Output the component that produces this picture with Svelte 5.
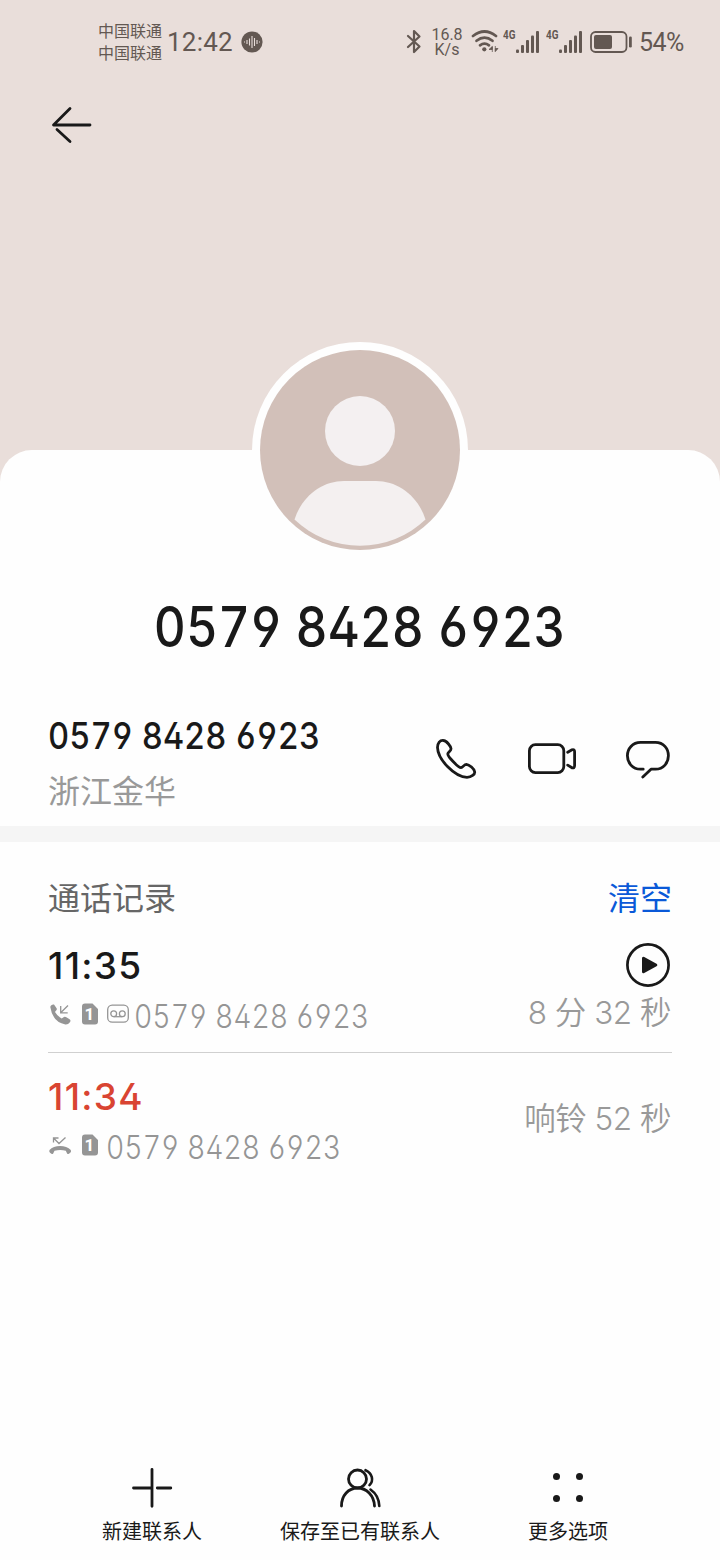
<script>
	const number = '0579 8428 6923';
	const carriers = ['中国联通', '中国联通'];
	const bar_heights = [3.5, 8, 13, 17.5, 22];
	const records = [
		{ time: '11:35', missed: false, recorded: true, duration: '8 分 32 秒' },
		{ time: '11:34', missed: true, recorded: false, duration: '响铃 52 秒' }
	];
</script>

<div class="screen">
	<header class="hero">
		<div class="status">
			<div class="carriers">
				{#each carriers as carrier}
					<span>{carrier}</span>
				{/each}
			</div>
			<span class="clock">12:42</span>
			<svg class="recorder" width="22" height="22" viewBox="0 0 22 22">
				<circle cx="11" cy="11" r="10.6" fill="#635852" />
				<path d="M3 11h1M6 9v4M8.5 7.5v7M11 5v12M13.5 7v8M16 9v4M18 11h1" stroke="#e9deda" stroke-width="1.1" />
			</svg>

			<div class="indicators">
				<svg class="bluetooth" width="16" height="26" viewBox="0 0 16 26">
					<path d="M2 7 13.500 17.500 8 23V2l5.500 5.500L2 18" fill="none" stroke="#635852" stroke-width="2.200" stroke-linejoin="round" stroke-linecap="round" />
				</svg>
				<div class="speed">
					<span>16.8</span>
					<span>K/s</span>
				</div>
				<svg class="wifi" width="28" height="24" viewBox="0 0 28 24">
					<g fill="none" stroke="#635852" stroke-width="2.700" stroke-linecap="round">
						<path d="M2 6Q13.500 -3 25 6" />
						<path d="M5.500 10.800Q13.500 4.500 21.500 10.800" />
						<path d="M9 15.300Q13.500 12 18 15.300" />
					</g>
					<circle cx="13.300" cy="19.300" r="2.100" fill="#635852" />
					<path d="M18 19.500h3.300V16.500zM21.300 16.500v5.500M24.300 16v5.500M24.300 18.500h2.700l-2.700 3z" fill="#635852" stroke="#635852" stroke-width=".8" />
				</svg>
				{#each [1, 2] as sim (sim)}
					<div class="signal">
						<span>4G</span>
						<svg width="24" height="23" viewBox="0 0 24 23">
							{#each bar_heights as h, i}
								<rect x={i * 5} y={22 - h} width="3" height={h} rx="1" fill="#635852" />
							{/each}
						</svg>
					</div>
				{/each}
				<svg class="battery" width="42" height="22" viewBox="0 0 42 22">
					<rect x="1" y="1" width="35.500" height="20" rx="4.500" fill="none" stroke="#635852" stroke-width="1.800" />
					<rect x="4" y="4" width="18" height="14" rx="2" fill="#635852" />
					<rect x="39" y="5.500" width="2.800" height="11" rx="1.300" fill="#635852" />
				</svg>
				<span class="percent">54%</span>
			</div>
		</div>

		<button class="back" aria-label="返回">
			<svg width="48" height="48" viewBox="0 0 48 48">
				<path d="M42 24H5.500L22 7.500M9 28.500 22 40.500" />
			</svg>
		</button>
	</header>

	<main class="sheet">
		<div class="avatar">
			<svg width="200" height="200" viewBox="0 0 200 200">
				<circle cx="100" cy="100" r="100" fill="#d2c0b9" />
				<circle cx="100" cy="81" r="35" fill="#f4f0f1" />
				<path d="M34.500 169.500C42 146 62 131 84 131h32c22 0 42 15 49.500 38.500a95 95 0 0 1-131 0z" fill="#f4f0f0" />
			</svg>
		</div>
		<h1><span class="digits">{number}</span></h1>

		<section class="contact">
			<div>
				<p class="phone"><span class="digits">{number}</span></p>
				<p class="region">浙江金华</p>
			</div>
			<div class="actions">
				<svg width="48" height="48" viewBox="0 0 48 48">
					<path d="M11.500 5.500C8 5 5.500 8 5.500 12.500 6 24.500 22.500 42 35 42.300c4.500 0 8-3 7.700-5.500-.3-2.800-5.500-7.300-8.200-7.500-2.500 0-3.500 3.200-5.500 3.400-2.500.1-13.500-11.200-13.200-13.900.2-1.800 3.400-2.800 3.200-5.300-.2-2-4.500-8-7.500-8z" />
				</svg>
				<svg width="48" height="48" viewBox="0 0 48 48">
					<rect x="1.400" y="9.700" width="34.400" height="27.900" rx="6" />
					<path d="M39.700 17.300 44 14.800q2.600-1 2.600 2v13.800q0 3-2.600 2.200l-4.300-2.700" />
				</svg>
				<svg width="48" height="48" viewBox="0 0 48 48">
					<path d="M18.800 42 27 34.200h4.500c8 0 12.900-6.500 12.900-13.500S39.500 7.400 31.500 7.400h-15c-8 0-13.100 6.300-13.100 13.300s5 13.500 13.100 13.500h2.700" />
				</svg>
			</div>
		</section>

		<section class="log">
			<div class="log-head">
				<h2>通话记录</h2>
				<button class="clear">清空</button>
			</div>
			{#each records as record}
				<div class="record">
					<div>
						<p class="time" class:missed={record.missed}>{record.time}</p>
						<div class="meta">
							{#if record.missed}
								<svg class="kind" width="24" height="22" viewBox="0 0 24 22">
									<path d="M1.500 16C6 10.500 18 10.500 22.800 16q.7 1.500-.5 2.800l-1.800 1.200q-.8.2-1.400-.5l-1.300-2.700q-5.500-1.800-11.300 0l-1.300 2.700q-.6.7-1.400.5l-1.800-1.200q-1.200-1.300-.5-2.800z" fill="#959595" />
									<path d="M5.500 8.500V4h5M5.500 4l5.500 5.500L17.500 3.500" fill="none" stroke="#959595" stroke-width="1.300" />
								</svg>
							{:else}
								<svg class="kind" width="24" height="22" viewBox="0 0 24 22">
									<path d="M2.300 4C2.500 2.300 4.500 1 6 1.500l2.600 3.700q.7 1.500-.7 2.600L7 9q2.200 4 6.700 6.600l1.500-1.200q1.300-1.100 2.700-.3l3.700 2.200q1.600 1.300.3 3-1.700 2.400-4.500 2.200Q4.500 19 2.300 4z" fill="#959595" />
									<path d="M12.700 3v6.800h7M12.700 9.800l7.300-7.300" fill="none" stroke="#959595" stroke-width="1.300" />
								</svg>
							{/if}
							<svg class="sim" width="16" height="22" viewBox="0 0 16 22">
								<path d="M3 .500h7.500L16 6v12.500a3 3 0 0 1-3 3H3a3 3 0 0 1-3-3v-15a3 3 0 0 1 3-3z" fill="#959595" />
								<text x="7.500" y="17.200" text-anchor="middle">1</text>
							</svg>
							{#if record.recorded}
								<svg class="voicemail" width="22" height="22" viewBox="0 0 22 22">
									<g fill="none" stroke="#959595" stroke-width="1.300">
										<rect x=".700" y="2.200" width="20.600" height="17" rx="4.500" />
										<circle cx="6.700" cy="10.800" r="2.900" />
										<circle cx="15.300" cy="10.800" r="2.900" />
										<path d="M6.700 13.700h8.600" />
									</g>
								</svg>
							{/if}
							<span class="caller digits">{number}</span>
						</div>
					</div>
					<div class="result">
						{#if record.recorded}
							<svg width="44" height="44" viewBox="0 0 44 44">
								<circle cx="22" cy="22" r="20.600" fill="none" stroke="#191919" stroke-width="2.700" />
								<path d="M17.500 15.200v13.600L29.800 22z" fill="#191919" stroke="#191919" stroke-width="3" stroke-linejoin="round" />
							</svg>
						{/if}
						<span>{record.duration}</span>
					</div>
				</div>
			{/each}
		</section>

		<nav>
			<button>
				<svg width="48" height="44" viewBox="0 0 48 44">
					<path d="M24 3.300v37M5.500 22H24M29.300 22h13.500" />
				</svg>
				新建联系人
			</button>
			<button>
				<svg width="48" height="44" viewBox="0 0 48 44">
					<circle cx="21.500" cy="13" r="9" />
					<path d="M5.500 40c0-10.500 7-18 16-18s16.500 7.500 17 18" />
					<path class="behind" d="M29.500 4.200c7 3 8.500 10.500 4 15M34.500 23.500c5 3.500 8.500 9.500 8.800 16.500" />
				</svg>
				保存至已有联系人
			</button>
			<button>
				<svg class="dots" width="48" height="44" viewBox="0 0 48 44">
					<circle cx="12.500" cy="10.500" r="3.500" />
					<circle cx="35.500" cy="10.500" r="3.500" />
					<circle cx="12.500" cy="32.500" r="3.500" />
					<circle cx="35.500" cy="32.500" r="3.500" />
				</svg>
				更多选项
			</button>
		</nav>
	</main>
</div>

<style>
	:global(body) {
		margin: 0;
	}
	.screen {
		display: flex;
		flex-direction: column;
		width: 720px;
		height: 1560px;
		overflow: hidden;
		background: #e9deda;
		color: #191919;
		font-family: Inter, 'Noto Sans CJK SC', sans-serif;
		font-feature-settings: 'cv02', 'cv03', 'cv04';
	}
	h1,
	h2,
	p {
		margin: 0;
		font-weight: 400;
	}
	button {
		padding: 0;
		border: 0;
		background: none;
		color: inherit;
		font: inherit;
	}
	svg {
		display: block;
		flex: none;
	}
	.digits {
		display: inline-block;
		font-feature-settings: 'cv02', 'cv03', 'cv04', 'tnum';
		white-space: nowrap;
		transform: scaleX(0.885);
		transform-origin: left;
	}
	.hero {
		height: 450px;
		flex: none;
	}
	.status {
		display: flex;
		align-items: center;
		height: 84px;
		padding: 0 36px 0 98px;
		box-sizing: border-box;
		color: #635852;
		white-space: nowrap;
	}
	.carriers {
		display: flex;
		flex-direction: column;
		font-size: 16px;
		line-height: 22px;
	}
	.clock {
		width: 74px;
		margin-left: 5px;
		font-family: Roboto, sans-serif;
		font-size: 26px;
		letter-spacing: 0.2px;
	}
	.indicators {
		display: flex;
		align-items: center;
		margin-left: auto;
	}
	.speed {
		display: flex;
		flex-direction: column;
		width: 32px;
		margin-left: 9px;
		text-align: center;
		font-family: Roboto, sans-serif;
		font-size: 16px;
		line-height: 15px;
	}
	.wifi {
		margin-left: 8px;
	}
	.signal {
		display: flex;
		align-items: flex-start;
		margin-left: 4px;
		width: 39px;
	}
	.signal span {
		width: 13px;
		margin-top: -1px;
		font-family: Roboto, sans-serif;
		font-size: 13px;
		font-weight: 700;
		line-height: 10px;
		transform: scaleX(0.76);
		transform-origin: left;
	}
	.battery {
		margin-left: 5px;
	}
	.percent {
		width: 45px;
		margin-left: 7px;
		font-family: Roboto, sans-serif;
		font-size: 25px;
		line-height: 30px;
		padding-top: 2px;
		letter-spacing: -0.5px;
	}
	.back {
		display: block;
		margin: 17px 0 0 48px;
	}
	.back svg,
	.actions svg,
	nav svg {
		fill: none;
		stroke: #191919;
		stroke-width: 2.8;
		stroke-linecap: round;
		stroke-linejoin: round;
	}
	.sheet {
		display: flex;
		flex: 1;
		flex-direction: column;
		border-radius: 32px 32px 0 0;
		background: #fefefe;
	}
	.avatar {
		align-self: center;
		margin-top: -108px;
		padding: 8px;
		border-radius: 50%;
		background: #fefefe;
	}
	h1 {
		margin-top: 29px;
		text-align: center;
		font-size: 56px;
		font-weight: 500;
		line-height: 80px;
	}
	h1 .digits {
		transform-origin: center;
	}
	.contact {
		display: flex;
		justify-content: space-between;
		height: 159px;
		padding: 43px 48px 0;
		box-sizing: border-box;
	}
	.phone {
		height: 53px;
		font-size: 37px;
		font-weight: 500;
		line-height: 52px;
	}
	.region {
		color: #999;
		font-size: 32px;
		line-height: 57px;
	}
	.actions {
		display: flex;
		gap: 48px;
		padding-top: 25px;
	}
	.log {
		padding: 30px 48px 0;
		border-top: 16px solid #f5f5f5;
	}
	.log-head {
		display: flex;
		justify-content: space-between;
		height: 52px;
		line-height: 54px;
	}
	h2 {
		color: #666;
		font-size: 32px;
	}
	.clear {
		color: #0a59d8;
		font-size: 32px;
		line-height: 54px;
	}
	.record {
		display: flex;
		justify-content: space-between;
		height: 129px;
		padding-top: 17px;
		box-sizing: border-box;
		border-bottom: 1px solid #d0d0d0;
	}
	.record:last-child {
		padding-top: 19px;
		border-bottom: 0;
	}
	.time {
		height: 50px;
		font-size: 37px;
		font-weight: 500;
		line-height: 50px;
		letter-spacing: 1.3px;
	}
	.time.missed {
		color: #d94432;
	}
	.meta {
		display: flex;
		align-items: flex-start;
		height: 52px;
	}
	.meta svg {
		margin-top: 12px;
	}
	.sim {
		margin-left: 10px;
	}
	.sim text {
		fill: #fff;
		font-family: Roboto, sans-serif;
		font-size: 17px;
		font-weight: 700;
	}
	.voicemail {
		margin-left: 9px;
	}
	.caller {
		margin-left: 8px;
		color: #959595;
		font-size: 32px;
		font-weight: 350;
		line-height: 52px;
	}
	.voicemail + .caller {
		margin-left: 5px;
	}
	.result {
		display: flex;
		flex-direction: column;
		align-items: flex-end;
		padding: 2px 1px 0 0;
		color: #999;
		font-size: 31.5px;
		font-weight: 350;
		line-height: 52px;
		letter-spacing: -0.5px;
	}
	.result svg {
		margin-right: 1px;
	}
	.record:last-child .result {
		padding-top: 21px;
	}
	nav {
		display: flex;
		height: 94px;
		margin-top: auto;
		padding: 0 48px;
	}
	nav button {
		display: flex;
		flex: 1;
		flex-direction: column;
		align-items: center;
		font-size: 20px;
		line-height: 45px;
		white-space: nowrap;
	}
	nav .behind {
		stroke-width: 2.6;
	}
	nav .dots {
		fill: #191919;
		stroke: none;
	}
</style>
